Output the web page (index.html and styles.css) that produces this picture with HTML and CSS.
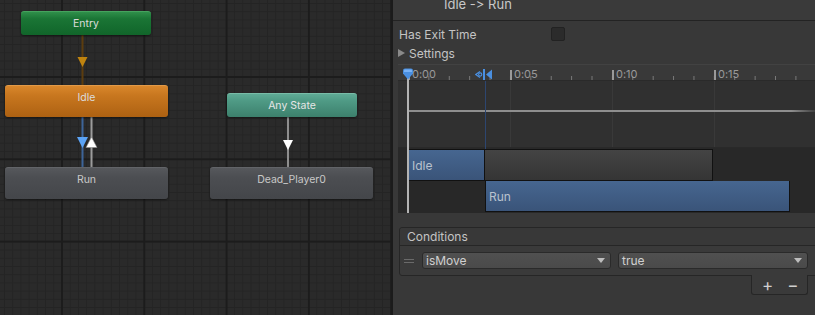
FILE: index.html
```html
<!DOCTYPE html>
<html lang="en">
<head>
    <meta charset="UTF-8">
    <title>Animator - Idle -> Run</title>
    <link rel="stylesheet" href="styles.css">
</head>
<body>

    <!-- State machine graph -->
    <section class="graph">
        <svg class="links" width="391" height="315" viewBox="0 0 391 315">
            <!-- Entry -> Idle -->
            <line x1="82.5" y1="35" x2="82.5" y2="85" stroke="#5c3d0e" stroke-width="2"/>
            <polygon points="77.5,57 87.5,57 82.5,67" fill="#c0840f"/>
            <!-- Idle -> Run -->
            <line x1="82.5" y1="117" x2="82.5" y2="167" stroke="#3d6499" stroke-width="2"/>
            <polygon points="77,137 88,137 82.5,148" fill="#5ba3f5"/>
            <!-- Run -> Idle -->
            <line x1="91.5" y1="117" x2="91.5" y2="167" stroke="#9c9c9c" stroke-width="2"/>
            <polygon points="86,147.5 97,147.5 91.5,137" fill="#ffffff" stroke="#8a8a8a" stroke-width="0.6"/>
            <!-- Any State -> Dead_Player0 -->
            <line x1="288" y1="117" x2="288" y2="167" stroke="#8e8e8e" stroke-width="2"/>
            <polygon points="283,140 293,140 288,150" fill="#ffffff"/>
        </svg>

        <div class="node node-entry" style="left: 21px; top: 11px; width: 130px;">Entry</div>
        <div class="node node-state node-default" style="left: 5px; top: 85px; width: 163px;">Idle</div>
        <div class="node node-any" style="left: 227px; top: 93px; width: 130px;">Any State</div>
        <div class="node node-state" style="left: 5px; top: 167px; width: 163px;">Run</div>
        <div class="node node-state" style="left: 210px; top: 167px; width: 163px;">Dead_Player0</div>
    </section>

    <!-- Transition inspector -->
    <aside class="inspector">
        <div class="title-bar">
            <span>Idle -&gt; Run</span>
        </div>

        <div class="field-row">
            <label>Has Exit Time</label>
            <span class="checkbox"></span>
        </div>

        <div class="foldout">
            <span class="fold-arrow"></span>
            <span>Settings</span>
        </div>

        <div class="timeline">
            <div class="ruler">
                <span class="tick-label">0:00</span>
                <span class="tick-label">0:05</span>
                <span class="tick-label">0:10</span>
                <span class="tick-label">0:15</span>
            </div>
            <div class="curve-area">
                <div class="weight-line"></div>
            </div>
            <div class="clips">
                <div class="clip-row">
                    <div class="clip clip-blue" style="width: 77px;">Idle</div>
                    <div class="clip clip-grey" style="width: 228px;"></div>
                </div>
                <div class="clip-row clip-row-next">
                    <div class="clip clip-blue" style="width: 305px;">Run</div>
                </div>
            </div>

            <!-- markers drawn over the timeline -->
            <div class="transition-line"></div>
            <div class="playhead-line"></div>
            <svg class="playhead" width="12" height="12" viewBox="0 0 12 12">
                <path d="M1 2.5 Q1 0.5 3 0.5 H9 Q11 0.5 11 2.5 V5.5 L6 11.5 L1 5.5 Z" fill="#4a8fe0"/>
                <path d="M2 2.5 Q2 1.5 3 1.5 H9 Q10 1.5 10 2.5 V4 H2 Z" fill="#79b2f5"/>
            </svg>
            <svg class="transition-marker" width="18" height="11" viewBox="0 0 18 11">
                <polyline points="5,2.5 0.8,5.5 5,8.5" fill="none" stroke="#4a8fe0" stroke-width="1.2"/>
                <circle cx="5.2" cy="5.5" r="1.6" fill="none" stroke="#4a8fe0" stroke-width="1.1"/>
                <rect x="8" y="0" width="2" height="11" fill="#4a8fe0"/>
                <polygon points="17,0.5 17,10.5 11,5.5" fill="#4a8fe0"/>
            </svg>
        </div>

        <div class="conditions">
            <div class="conditions-header">Conditions</div>
            <div class="conditions-body">
                <span class="drag-handle"></span>
                <div class="dropdown dropdown-param">
                    <span>isMove</span>
                    <span class="caret"></span>
                </div>
                <div class="dropdown dropdown-value">
                    <span>true</span>
                    <span class="caret"></span>
                </div>
            </div>
        </div>
        <div class="list-footer">
            <span class="footer-btn">+</span>
            <span class="footer-btn">&minus;</span>
        </div>
    </aside>

</body>
</html>
```

FILE: styles.css
```css
/* Reset default styles */
* {
    margin: 0;
    padding: 0;
    box-sizing: border-box;
}

body {
    font-family: Inter, "Noto Sans", sans-serif;
    font-feature-settings: "calt" 0, "liga" 0;
    width: 815px;
    height: 315px;
    overflow: hidden;
    display: flex;
    background-color: #383838;
    color: #c4c4c4;
}

/* Graph canvas */
.graph {
    position: relative;
    width: 393px;
    height: 315px;
    flex-shrink: 0;
    border-right: 2px solid #1b1b1b;
    background-color: #2a2a2a;
    background-image:
        linear-gradient(to right, #1c1c1c 2px, transparent 2px),
        linear-gradient(to bottom, #1c1c1c 2px, transparent 2px),
        linear-gradient(to right, #242424 1px, transparent 1px),
        linear-gradient(to bottom, #242424 1px, transparent 1px);
    background-size: 82.3px 100%, 100% 82.3px, 8.23px 100%, 100% 8.23px;
    background-position: 61px 0, 0 76px, 4px 0, 0 3px;
}

.links {
    position: absolute;
    left: 0;
    top: 0;
}

.node {
    position: absolute;
    display: flex;
    align-items: center;
    justify-content: center;
    border-radius: 3px;
    font-size: 10.5px;
    color: #dcdcdc;
    box-shadow: 0 1px 2px rgba(0, 0, 0, 0.5);
}

.node-entry {
    height: 24px;
    background: linear-gradient(#2f8f4a, #1a7535 30%, #11652a);
    border-top: 1px solid #45a35e;
}

.node-any {
    height: 24px;
    background: linear-gradient(#5fab96, #4f9a85 30%, #3c806c);
    border-top: 1px solid #79bca8;
    color: #e6e6e6;
}

.node-state {
    height: 32px;
    padding-bottom: 8px;
    background: linear-gradient(#56585c, #4c4e52 30%, #44464a);
    border-top: 1px solid #626468;
    color: #c8c8c8;
}

.node-default {
    background: linear-gradient(#d9872c, #c8771f 30%, #ad6112);
    border-top: 1px solid #e29a48;
    color: #dcdcdc;
}

/* Inspector */
.inspector {
    flex: 1;
    display: flex;
    flex-direction: column;
    font-size: 12px;
}

.title-bar {
    height: 21px;
    padding-left: 51px;
    background-color: #3a3a3a;
    border-bottom: 1px solid #232323;
    overflow: hidden;
}

.title-bar span {
    display: block;
    font-size: 13px;
    line-height: 16px;
    margin-top: -4px;
    color: #c8c8c8;
}

.field-row {
    display: flex;
    align-items: center;
    height: 16px;
    margin-top: 5px;
    padding-left: 6px;
}

.field-row label {
    width: 152px;
}

.checkbox {
    width: 14px;
    height: 14px;
    background-color: #2b2b2b;
    border: 1px solid #222;
    border-radius: 2px;
}

.foldout {
    display: flex;
    align-items: center;
    height: 16px;
    margin-top: 3px;
    padding-left: 5px;
}

.fold-arrow {
    width: 0;
    height: 0;
    border-left: 7px solid #8a8a8a;
    border-top: 4px solid transparent;
    border-bottom: 4px solid transparent;
    margin-right: 4px;
}

/* Transition timeline */
.timeline {
    position: relative;
    margin: 3px 0 0 5px;
    height: 149px;
    background-color: #282828;
}

.ruler {
    display: flex;
    height: 17px;
    padding-left: 14px;
    background-color: #393939;
    border-top: 1px solid #424242;
    border-bottom: 1px solid #2a2a2a;
    background-image:
        linear-gradient(to right, #9a9a9a 2px, transparent 2px),
        linear-gradient(to right, #7a7a7a 1px, transparent 1px);
    background-size: 102px 10px, 20.4px 4px;
    background-position: 112px 100%, 10px 100%;
    background-repeat: repeat-x;
}

.tick-label {
    width: 102px;
    flex-shrink: 0;
    font-size: 11px;
    line-height: 15px;
    padding-top: 2px;
    color: #9a9a9a;
}

.curve-area {
    height: 67px;
    padding-top: 29px;
    background-color: #303030;
    background-image: linear-gradient(to right, #393939 1px, transparent 1px);
    background-size: 102px 100%;
    background-position: 112px 0;
    background-repeat: repeat-x;
    border-bottom: 1px solid #292929;
}

.weight-line {
    height: 2px;
    margin-left: 10px;
    background: linear-gradient(to right, #8e8e8e 93%, transparent);
}

.clips {
    padding-top: 1px;
}

.clip-row {
    display: flex;
    padding-left: 10px;
}

.clip-row-next {
    padding-left: 87px;
}

.clip {
    height: 32px;
    display: flex;
    align-items: center;
    padding-left: 3px;
    font-size: 12px;
    border: 1px solid #111;
}

.clip-blue {
    background: linear-gradient(#466690, #3a5479);
    color: #b9c2ce;
}

.clip-grey {
    background: linear-gradient(#444, #353535);
    border-left: none;
}

.clip-row-next .clip {
    height: 31px;
    border-top: none;
}

.transition-line {
    position: absolute;
    left: 87px;
    top: 17px;
    width: 1px;
    height: 68px;
    background-color: #2d4670;
}

.playhead-line {
    position: absolute;
    left: 9px;
    top: 13px;
    width: 2px;
    height: 136px;
    background-color: #b3b3b3;
}

.playhead {
    position: absolute;
    left: 4px;
    top: 4px;
}

.transition-marker {
    position: absolute;
    left: 77px;
    top: 5px;
}

/* Conditions list */
.conditions {
    margin: 14px 2px 0 6px;
    border: 1px solid #262626;
    border-radius: 3px;
    background-color: #3a3a3a;
}

.conditions-header {
    height: 18px;
    line-height: 18px;
    padding-left: 7px;
    border-bottom: 1px solid #262626;
    background-color: #383838;
    border-radius: 3px 3px 0 0;
}

.conditions-body {
    display: flex;
    align-items: center;
    height: 29px;
    padding: 0 6px 0 4px;
}

.drag-handle {
    width: 10px;
    height: 4px;
    margin-right: 8px;
    border-top: 1px solid #6a6a6a;
    border-bottom: 1px solid #6a6a6a;
}

.dropdown {
    display: flex;
    align-items: center;
    justify-content: space-between;
    height: 17px;
    padding: 0 5px 0 3px;
    background: linear-gradient(#505050, #4a4a4a);
    border: 1px solid #2a2a2a;
    border-radius: 3px;
    color: #d0d0d0;
}

.dropdown-param {
    width: 189px;
    margin-right: 7px;
}

.dropdown-value {
    width: 190px;
}

.caret {
    width: 0;
    height: 0;
    border-top: 5px solid #bdbdbd;
    border-left: 4px solid transparent;
    border-right: 4px solid transparent;
}

.list-footer {
    align-self: flex-end;
    display: flex;
    align-items: center;
    gap: 14px;
    width: 57px;
    height: 20px;
    margin: -1px 12px 0 0;
    padding-left: 10px;
    background-color: #3a3a3a;
    border: 1px solid #262626;
    border-top: none;
    border-radius: 0 0 3px 3px;
}

.footer-btn {
    font-size: 17px;
    line-height: 16px;
    color: #cfcfcf;
}
```
